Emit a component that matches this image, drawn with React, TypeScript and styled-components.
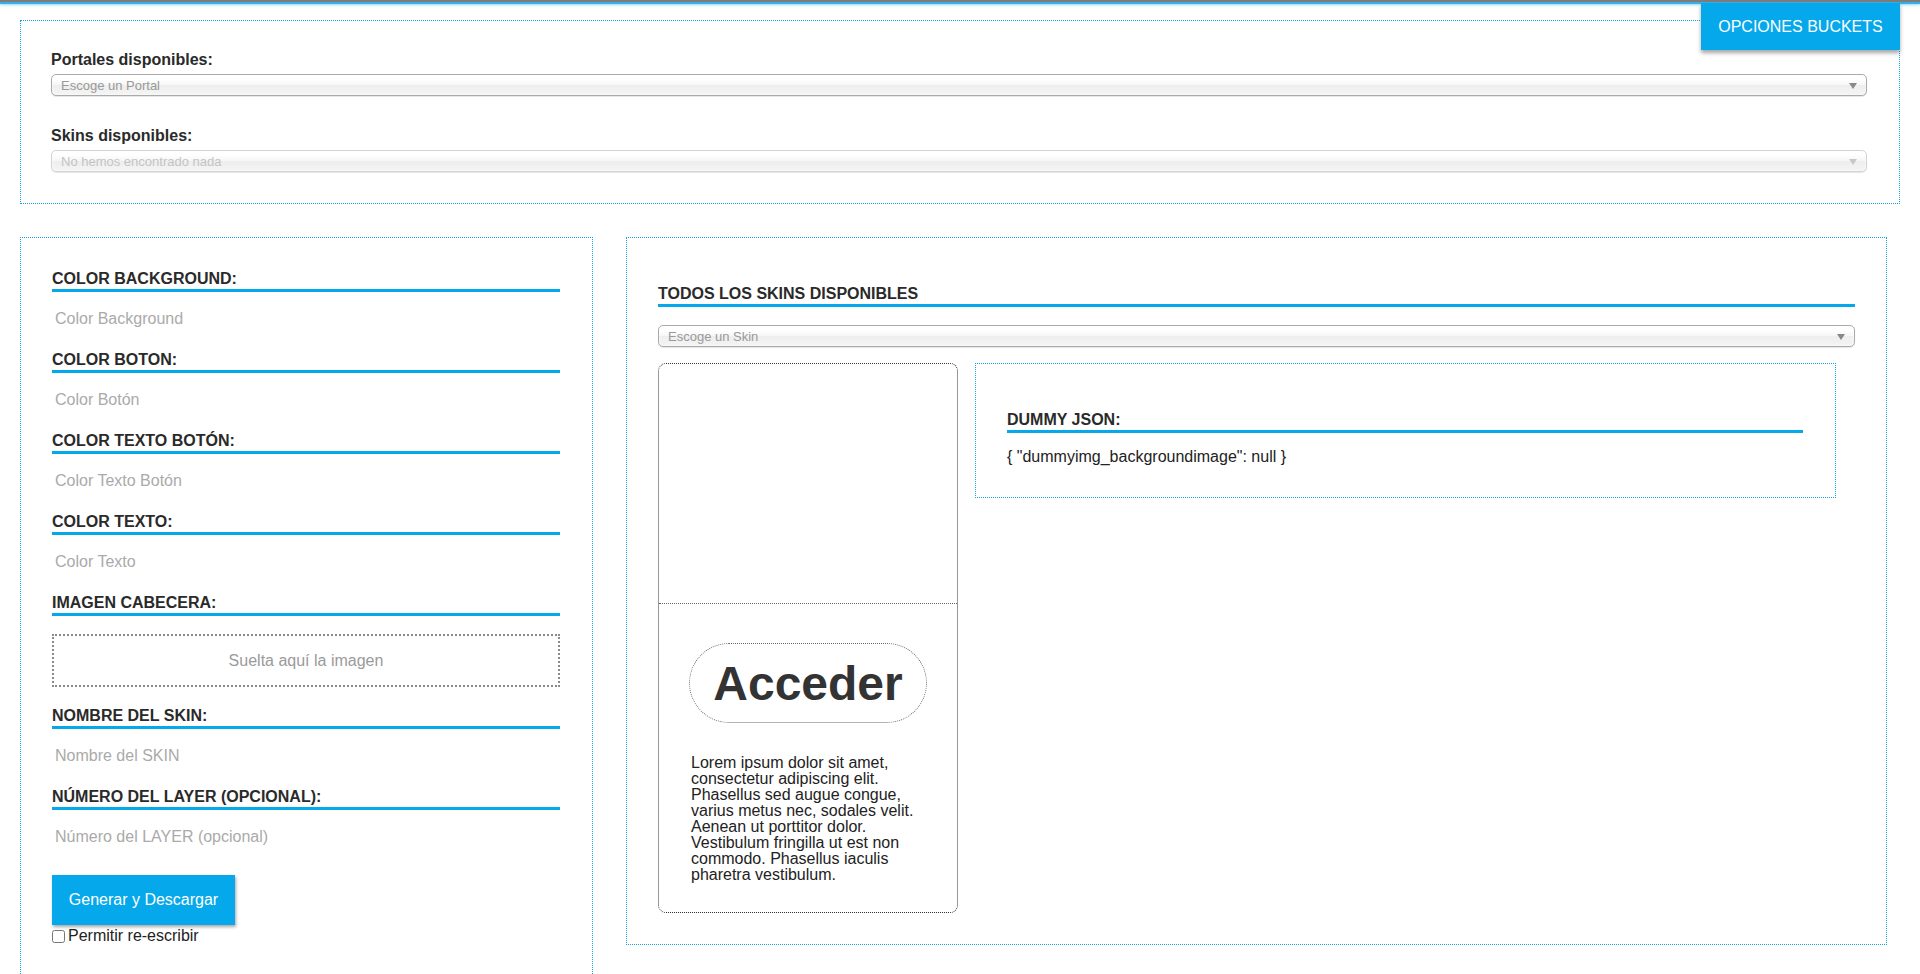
import React from "react";
import styled, { createGlobalStyle } from "styled-components";

const BLUE = "#05a8ea";
const DOT_BLUE = "#14a4e2";

const GlobalStyle = createGlobalStyle`
  html, body { margin: 0; padding: 0; background: #fff; }
  body { font-family: "Liberation Sans", Arial, Helvetica, sans-serif; color: #2a2a2a; }
  * { box-sizing: border-box; }
`;

const Page = styled.div`
  padding: 0 20px 0 20px;
`;

const TopBar = styled.div`
  height: 4px;
  margin: 0 -20px;
  border-top: 2px solid #7c7c7c;
  background: #3aaee5;
  box-shadow: 0 1px 3px rgba(58, 174, 229, 0.55);
`;

const TopBox = styled.section`
  position: relative;
  margin-top: 16px;
  border: 1px dotted ${DOT_BLUE};
  padding: 30px 32px 31px 30px;
  display: flex;
  flex-direction: column;
  gap: 31px;
`;

const BucketsButton = styled.button`
  position: absolute;
  top: -18px;
  right: -1px;
  width: 199px;
  height: 47px;
  border: none;
  background: ${BLUE};
  color: #fff;
  font-family: "Liberation Sans", Arial, sans-serif;
  font-size: 16px;
  box-shadow: 0 3px 4px rgba(0, 0, 0, 0.35);
  cursor: pointer;
`;

const Field = styled.div`
  display: flex;
  flex-direction: column;
  gap: 5px;
`;

const FieldLabel = styled.label`
  font-size: 16px;
  line-height: 18px;
  font-weight: bold;
  color: #2a2a2a;
`;

const SelectBox = styled.div<{ $disabled?: boolean }>`
  height: 22px;
  display: flex;
  align-items: center;
  justify-content: space-between;
  padding: 0 9px 0 9px;
  border: 1px solid ${(p) => (p.$disabled ? "#d4d4d4" : "#aaa")};
  border-radius: 5px;
  background: linear-gradient(#fff 20%, #f6f6f6 50%, #eee 52%, #f4f4f4 100%);
  box-shadow: 0 0 3px #fff inset, 0 1px 1px rgba(0, 0, 0, 0.1);
  font-size: 13px;
  color: ${(p) => (p.$disabled ? "#c4c4c4" : "#999")};
  cursor: default;
`;

const Arrow = styled.span<{ $disabled?: boolean }>`
  width: 0;
  height: 0;
  border-left: 4px solid transparent;
  border-right: 4px solid transparent;
  border-top: 6px solid ${(p) => (p.$disabled ? "#c8c8c8" : "#888")};
  margin-top: 1px;
`;

const Columns = styled.div`
  margin-top: 33px;
  display: grid;
  grid-template-columns: 573px 1261px;
  column-gap: 33px;
  align-items: start;
`;

const LeftPanel = styled.section`
  border: 1px dotted ${DOT_BLUE};
  padding: 32px 32px 32px 31px;
  display: flex;
  flex-direction: column;
`;

const RightPanel = styled.section`
  border: 1px dotted ${DOT_BLUE};
  padding: 31px 31px 31px 31px;
  display: flex;
  flex-direction: column;
`;

const SectionTitle = styled.h3<{ $spaced?: boolean }>`
  margin: ${(p) => (p.$spaced ? "16px" : "0")} 0 0 0;
  font-size: 16px;
  line-height: 18px;
  font-weight: bold;
  text-transform: uppercase;
  color: #2a2a2a;
  padding-bottom: 1px;
  border-bottom: 3px solid ${BLUE};
`;

const TextInput = styled.input`
  margin: 10px 0 15px 0;
  height: 34px;
  border: none;
  outline: none;
  padding: 0 3px;
  font-family: "Liberation Sans", Arial, sans-serif;
  font-size: 16px;
  color: #333;
  background: transparent;
  &::placeholder { color: #aaa; }
`;

const DropZone = styled.div`
  margin: 18px 0 20px 0;
  height: 53px;
  border: 2px dotted #8a8a8a;
  display: flex;
  align-items: center;
  justify-content: center;
  font-size: 16px;
  color: #9a9a9a;
`;

const PrimaryButton = styled.button`
  margin-top: 6px;
  align-self: flex-start;
  width: 183px;
  height: 50px;
  border: none;
  background: ${BLUE};
  color: #fff;
  font-family: "Liberation Sans", Arial, sans-serif;
  font-size: 16px;
  box-shadow: 1px 2px 3px rgba(0, 0, 0, 0.35);
  cursor: pointer;
`;

const CheckRow = styled.label`
  margin-top: 2px;
  display: flex;
  align-items: center;
  gap: 3px;
  font-size: 16px;
  line-height: 18px;
  color: #222;
  input {
    margin: 0;
    width: 13px;
    height: 13px;
  }
`;

const SkinSelect = styled(SelectBox)`
  margin-top: 18px;
`;

const PreviewRow = styled.div`
  margin-top: 16px;
  display: flex;
  align-items: flex-start;
  gap: 17px;
`;

const SkinCard = styled.div`
  width: 300px;
  border: 1px dotted #333;
  border-radius: 8px;
  display: flex;
  flex-direction: column;
  padding-bottom: 29px;
`;

const SkinImage = styled.div`
  height: 240px;
  border-bottom: 1px dotted #666;
`;

const AccessPill = styled.div`
  margin: 39px auto 0 auto;
  width: 238px;
  height: 80px;
  border: 1px dotted #666;
  border-radius: 40px;
  display: flex;
  align-items: center;
  justify-content: center;
  font-size: 48px;
  font-weight: bold;
  color: #333;
`;

const SkinText = styled.p`
  margin: 32px 0 0 0;
  padding: 0 32px;
  font-size: 16px;
  line-height: 16px;
  color: #222;
`;

const JsonBox = styled.div`
  width: 861px;
  border: 1px dotted ${DOT_BLUE};
  padding: 31px 32px 31px 31px;
  display: flex;
  flex-direction: column;
`;

const JsonText = styled.div`
  margin-top: 15px;
  font-size: 16px;
  line-height: 18px;
  color: #222;
`;

const fields = [
  { title: "Color Background:", placeholder: "Color Background" },
  { title: "Color Boton:", placeholder: "Color Botón" },
  { title: "Color Texto Botón:", placeholder: "Color Texto Botón" },
  { title: "Color Texto:", placeholder: "Color Texto" },
];

const fieldsAfter = [
  { title: "Nombre del Skin:", placeholder: "Nombre del SKIN" },
  { title: "Número del Layer (opcional):", placeholder: "Número del LAYER (opcional)" },
];

export default function App() {
  return (
    <>
      <GlobalStyle />
      <Page>
        <TopBar />
        <TopBox>
          <BucketsButton>OPCIONES BUCKETS</BucketsButton>
          <Field>
            <FieldLabel>Portales disponibles:</FieldLabel>
            <SelectBox>
              <span>Escoge un Portal</span>
              <Arrow />
            </SelectBox>
          </Field>
          <Field>
            <FieldLabel>Skins disponibles:</FieldLabel>
            <SelectBox $disabled>
              <span>No hemos encontrado nada</span>
              <Arrow $disabled />
            </SelectBox>
          </Field>
        </TopBox>

        <Columns>
          <LeftPanel>
            {fields.map((f) => (
              <React.Fragment key={f.title}>
                <SectionTitle>{f.title}</SectionTitle>
                <TextInput placeholder={f.placeholder} />
              </React.Fragment>
            ))}
            <SectionTitle>Imagen Cabecera:</SectionTitle>
            <DropZone>Suelta aquí la imagen</DropZone>
            {fieldsAfter.map((f) => (
              <React.Fragment key={f.title}>
                <SectionTitle>{f.title}</SectionTitle>
                <TextInput placeholder={f.placeholder} />
              </React.Fragment>
            ))}
            <PrimaryButton>Generar y Descargar</PrimaryButton>
            <CheckRow>
              <input type="checkbox" />
              Permitir re-escribir
            </CheckRow>
          </LeftPanel>

          <RightPanel>
            <SectionTitle $spaced>Todos los skins disponibles</SectionTitle>
            <SkinSelect>
              <span>Escoge un Skin</span>
              <Arrow />
            </SkinSelect>
            <PreviewRow>
              <SkinCard>
                <SkinImage />
                <AccessPill>Acceder</AccessPill>
                <SkinText>
                  Lorem ipsum dolor sit amet, consectetur adipiscing elit. Phasellus sed augue congue,
                  varius metus nec, sodales velit. Aenean ut porttitor dolor. Vestibulum fringilla ut
                  est non commodo. Phasellus iaculis pharetra vestibulum.
                </SkinText>
              </SkinCard>
              <JsonBox>
                <SectionTitle $spaced>Dummy JSON:</SectionTitle>
                <JsonText>{'{ "dummyimg_backgroundimage": null }'}</JsonText>
              </JsonBox>
            </PreviewRow>
          </RightPanel>
        </Columns>
      </Page>
    </>
  );
}
